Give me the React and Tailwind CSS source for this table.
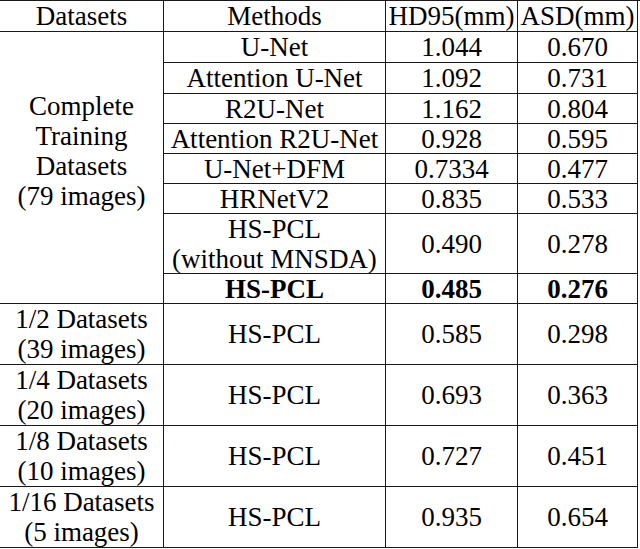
import React from 'react';

const rows = [
    { method: ['U-Net'], hd: '1.044', asd: '0.670', h: 'h-[31px]' },
    { method: ['Attention U-Net'], hd: '1.092', asd: '0.731', h: 'h-[31px]' },
    { method: ['R2U-Net'], hd: '1.162', asd: '0.804', h: 'h-[30px]' },
    { method: ['Attention R2U-Net'], hd: '0.928', asd: '0.595', h: 'h-[30px]' },
    { method: ['U-Net+DFM'], hd: '0.7334', asd: '0.477', h: 'h-[30px]' },
    { method: ['HRNetV2'], hd: '0.835', asd: '0.533', h: 'h-[30px]' },
    { method: ['HS-PCL', '(without MNSDA)'], hd: '0.490', asd: '0.278', h: 'h-[60px]' },
    { method: ['HS-PCL'], hd: '0.485', asd: '0.276', h: 'h-[30px]', bold: true },
];

const subsets = [
    { name: '1/2 Datasets', count: '(39 images)', hd: '0.585', asd: '0.298' },
    { name: '1/4 Datasets', count: '(20 images)', hd: '0.693', asd: '0.363' },
    { name: '1/8 Datasets', count: '(10 images)', hd: '0.727', asd: '0.451' },
    { name: '1/16 Datasets', count: '(5 images)', hd: '0.935', asd: '0.654' },
];

const cell = 'flex flex-col items-center justify-center border-b border-r border-[#1a1a1a] leading-[30px] whitespace-nowrap';

export default function App() {
    return (
        <div className="w-[640px] h-[549px] bg-white text-black font-['Liberation_Serif','DejaVu_Serif',serif]">
            <div className="grid grid-cols-[164px_222px_132px_120px] border-t border-[#1a1a1a] text-[27px]">
                {/* Header */}
                <div className={`${cell} h-[31px]`}>Datasets</div>
                <div className={`${cell} h-[31px]`}>Methods</div>
                <div className={`${cell} h-[31px]`}>HD95(mm)</div>
                <div className={`${cell} h-[31px]`}>ASD(mm)</div>

                {/* Complete training set */}
                <div className="row-span-8 flex flex-col items-center justify-start pt-[59px] border-b border-r border-[#1a1a1a] leading-[30px]">
                    <span>Complete</span>
                    <span>Training</span>
                    <span>Datasets</span>
                    <span>(79 images)</span>
                </div>
                {rows.map((r, i) => (
                    <React.Fragment key={i}>
                        <div className={`${cell} ${r.h} ${r.bold ? 'font-bold' : ''}`}>
                            {r.method.map(m => <span key={m}>{m}</span>)}
                        </div>
                        <div className={`${cell} ${r.h} ${r.bold ? 'font-bold' : ''}`}>{r.hd}</div>
                        <div className={`${cell} ${r.h} ${r.bold ? 'font-bold' : ''}`}>{r.asd}</div>
                    </React.Fragment>
                ))}

                {/* Subsets */}
                {subsets.map(s => (
                    <React.Fragment key={s.name}>
                        <div className={`${cell} h-[61px]`}>
                            <span>{s.name}</span>
                            <span>{s.count}</span>
                        </div>
                        <div className={`${cell} h-[61px]`}>HS-PCL</div>
                        <div className={`${cell} h-[61px]`}>{s.hd}</div>
                        <div className={`${cell} h-[61px]`}>{s.asd}</div>
                    </React.Fragment>
                ))}
            </div>
        </div>
    );
}
